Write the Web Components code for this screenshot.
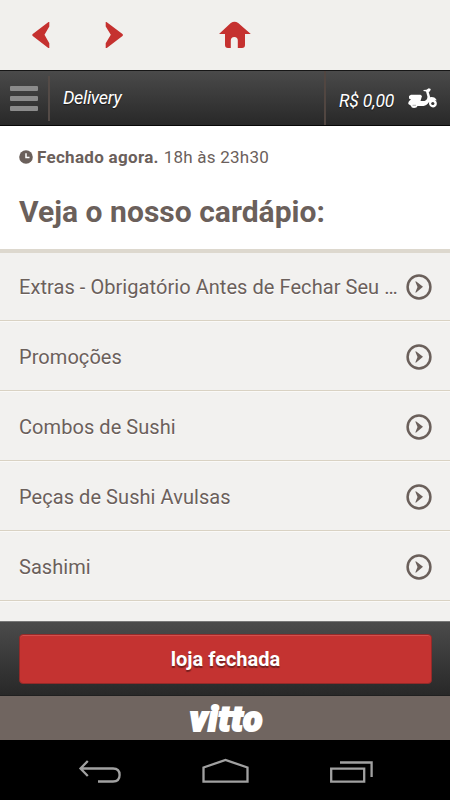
<!DOCTYPE html>
<html lang="pt-BR">
<head>
<meta charset="utf-8">
<title>Delivery</title>
<style>
html, body { margin: 0; height: 100%; }
body { font-family: Roboto, "Liberation Sans", sans-serif; color: #6b605b; background: #f2f1ef; overflow: hidden; }
</style>
</head>
<body>
<delivery-app></delivery-app>
<script>
const define = (name, html) => customElements.define(name, class extends HTMLElement {
  constructor() {
    super();
    const t = document.createElement('template');
    t.innerHTML = html;
    this.attachShadow({ mode: 'open' }).append(t.content.cloneNode(true));
  }
});

define('browser-bar', `
<style>
:host { display: flex; height: 70px; flex: none; box-sizing: border-box; padding: 20px 0 0 30px; background: #f1f0ed; }
svg { display: block; fill: #c5312f; flex: none; }
.next { margin-left: 49px; }
.home { margin-left: 92px; }
</style>
<svg width="24" height="30" viewBox="0 0 24 30"><path d="M18.5 2H19.3V6.5L14.5 14.8L19.3 23.2V28H18.3L2.4 15.7V14.3Z"/></svg>
<svg class="next" width="24" height="30" viewBox="0 0 24 30"><path d="M3.5 2H2.7V6.5L7.8 14.8L2.7 23.2V28H3.8L19.8 15.7V14.3Z"/></svg>
<svg class="home" width="34" height="30" viewBox="0 0 34 30"><path d="M0 14L11.8 3.1Q15.5 .6 19.2 3.1L31.8 14H26V25Q26 28 23 28H18.8V20.5Q18.8 17 15.3 17Q11.8 17 11.8 20.5V28H9Q6 28 6 25V14Z"/></svg>
`);

define('store-header', `
<style>
:host { display: flex; flex: none; height: 56px; box-sizing: border-box; border-top: 1px solid #161616; border-bottom: 1px solid #080808;
  background: linear-gradient(#4a4a4a, #282828); color: #fff; font-style: italic; font-size: 18px; text-shadow: 0 1px 1px #0009; }
.menu { width: 38px; padding: 15px 0 0 10px; box-sizing: border-box; display: flex; flex-direction: column; gap: 5px; }
.menu i { height: 5px; width: 28px; border-radius: 1px; background: #8b8b8b; }
.rule { width: 2px; background: #544b47; margin: 5px 0 4px 10px; flex: none; }
.title { flex: 1; padding: 16px 0 0 13px; line-height: 22px; letter-spacing: -.35px; }
.cart { display: flex; width: 126px; box-sizing: border-box; border-left: 2px solid #514641; padding: 19px 0 0 13px; }
.cart span { width: 69px; line-height: 22px; letter-spacing: -.15px; font-size: 17.5px; white-space: nowrap; }
</style>
<div class="menu"><i></i><i></i><i></i></div><div class="rule"></div>
<div class="title"><slot></slot></div>
<div class="cart"><span><slot name="total"></slot></span>
<svg width="30" height="22" viewBox="0 0 30 22" style="margin-top:-2px">
<path fill="#fff" d="M1 8L3 6.7H12.5L14 8L12.5 13H16.5Q19.7 11.8 19.4 8.5L18 3.4L15.5 2.9V2L18.4 1.8L20.8 .3L22.8 1L22 3.2L20.7 4L22.2 9.2Q27 8.5 28.8 12.5L26.8 11.8Q29.8 14.5 28.4 17.4Q26.3 20.5 23 18.8Q20.3 17 21.2 13.8Q18.7 17.8 15.5 18H9.5Q9 20 6 20Q3.4 20 2.7 17.5L.3 16Q0 13.2 3 11.5L1 10.5Z"/>
<circle cx="24.8" cy="15.5" r="1.6" fill="#353535"/><path d="M4.5 17.3H8" stroke="#999" stroke-width=".8"/></svg></div>
`);

define('store-intro', `
<style>
:host { display: block; flex: none; height: 127px; box-sizing: border-box; background: #fff; border-bottom: 4px solid #ddd8ce; padding: 20px 19px 0; }
.status { display: flex; align-items: flex-start; line-height: 22px; font-size: 17px; white-space: pre; }
svg { margin: 4px 4px 0 0; flex: none; }
.status b { letter-spacing: .3px; }
.hours { margin-left: 5px; letter-spacing: .22px; }
h1 { margin: 24px 0 0; font-size: 30px; line-height: 40px; font-weight: 700; letter-spacing: .03px; white-space: nowrap; }
</style>
<div class="status"><svg width="14" height="14" viewBox="0 0 14 14"><circle cx="7" cy="7" r="6.8" fill="#6b605b"/><path d="M7 3.2V7.4H10.5" fill="none" stroke="#fff" stroke-width="1.5"/></svg><b><slot name="state"></slot></b><span class="hours"><slot name="hours"></slot></span></div>
<h1><slot></slot></h1>
`);

define('menu-item', `
<style>
:host { display: flex; flex: none; height: 70px; box-sizing: border-box; align-items: center; border-bottom: 1px solid #d9d2c3; box-shadow: 0 1px #faf9f7; padding: 0 18px 0 19px; }
span { flex: 1; min-width: 0; padding-top: 2px; font-size: 20px; line-height: 28px; letter-spacing: .06px; white-space: nowrap; text-shadow: 0 1px #fff; }
svg { flex: none; margin: 3px 0 0 7px; }
</style>
<span><slot></slot></span>
<svg width="26" height="26" viewBox="0 0 26 26"><circle cx="13" cy="13" r="11.4" fill="none" stroke="#6b605b" stroke-width="2.5"/><path d="M9.6 7L17 12.8L9.6 19V17.8L11.5 12.9L9.6 8.2Z" fill="#6b605b"/></svg>
`);

define('store-action', `
<style>
:host { display: block; flex: none; height: 75px; box-sizing: border-box; border-top: 1px solid #777; border-bottom: 1px solid #202020; background: linear-gradient(#4b4b4b, #282828); padding: 12px 18px 0 19px; }
button { display: block; width: 100%; height: 50px; padding: 0; border: 1px solid #942a29; border-radius: 4px; background: #c43331; box-shadow: inset 0 1px #d2504d; color: #fff; font: 700 20px/48px Roboto, sans-serif; text-shadow: 0 2px 1px #0006; }
</style>
<button><slot></slot></button>
`);

define('brand-strip', `
<style>
:host { display: flex; flex: none; height: 44px; justify-content: center; background: #706560; color: #fff; }
span { display: block; padding-left: 3px; font: italic 900 35px/47px Roboto, sans-serif; letter-spacing: .9px; -webkit-text-stroke: 2.2px #fff; paint-order: stroke; stroke-linejoin: round; }
</style>
<span><slot></slot></span>
`);

define('system-nav', `
<style>
:host { display: flex; flex: none; height: 60px; background: #000; padding: 18px 76px 0 78px; box-sizing: border-box; justify-content: space-between; }
svg { fill: none; stroke: #a1a1a1; stroke-width: 2.3; }
</style>
<svg width="44" height="28" viewBox="0 0 44 28"><path d="M9.8 3L2.5 10.5L9.8 18M3 10.5H35Q41.6 10.5 41.6 17T35 23.5H20"/></svg>
<svg width="48" height="28" viewBox="0 0 48 28"><path d="M1.5 9.5L23.5 2L45.5 9.5V23.6H1.5Z"/></svg>
<svg width="44" height="28" viewBox="0 0 44 28"><path d="M1.2 10.6H34.2V23.6H1.2ZM10 4.5H41.6V19"/></svg>
`);

define('delivery-app', `
<style>
:host { display: flex; flex-direction: column; width: 450px; height: 800px; overflow: hidden; }
.list { flex: 1; min-height: 0; overflow: hidden; display: flex; flex-direction: column; margin-top: -2px; background: #f2f1ef; }
store-intro { z-index: 1; }
</style>
<browser-bar></browser-bar>
<store-header>Delivery<span slot="total">R$ 0,00</span></store-header>
<store-intro><span slot="state">Fechado agora.</span><span slot="hours">18h às 23h30</span>Veja o nosso cardápio:</store-intro>
<div class="list">
<menu-item>Extras - Obrigatório Antes de Fechar Seu …</menu-item>
<menu-item>Promoções</menu-item>
<menu-item>Combos de Sushi</menu-item>
<menu-item>Peças de Sushi Avulsas</menu-item>
<menu-item>Sashimi</menu-item>
</div>
<store-action>loja fechada</store-action>
<brand-strip>vitto</brand-strip>
<system-nav></system-nav>
`);
</script>
</body>
</html>
